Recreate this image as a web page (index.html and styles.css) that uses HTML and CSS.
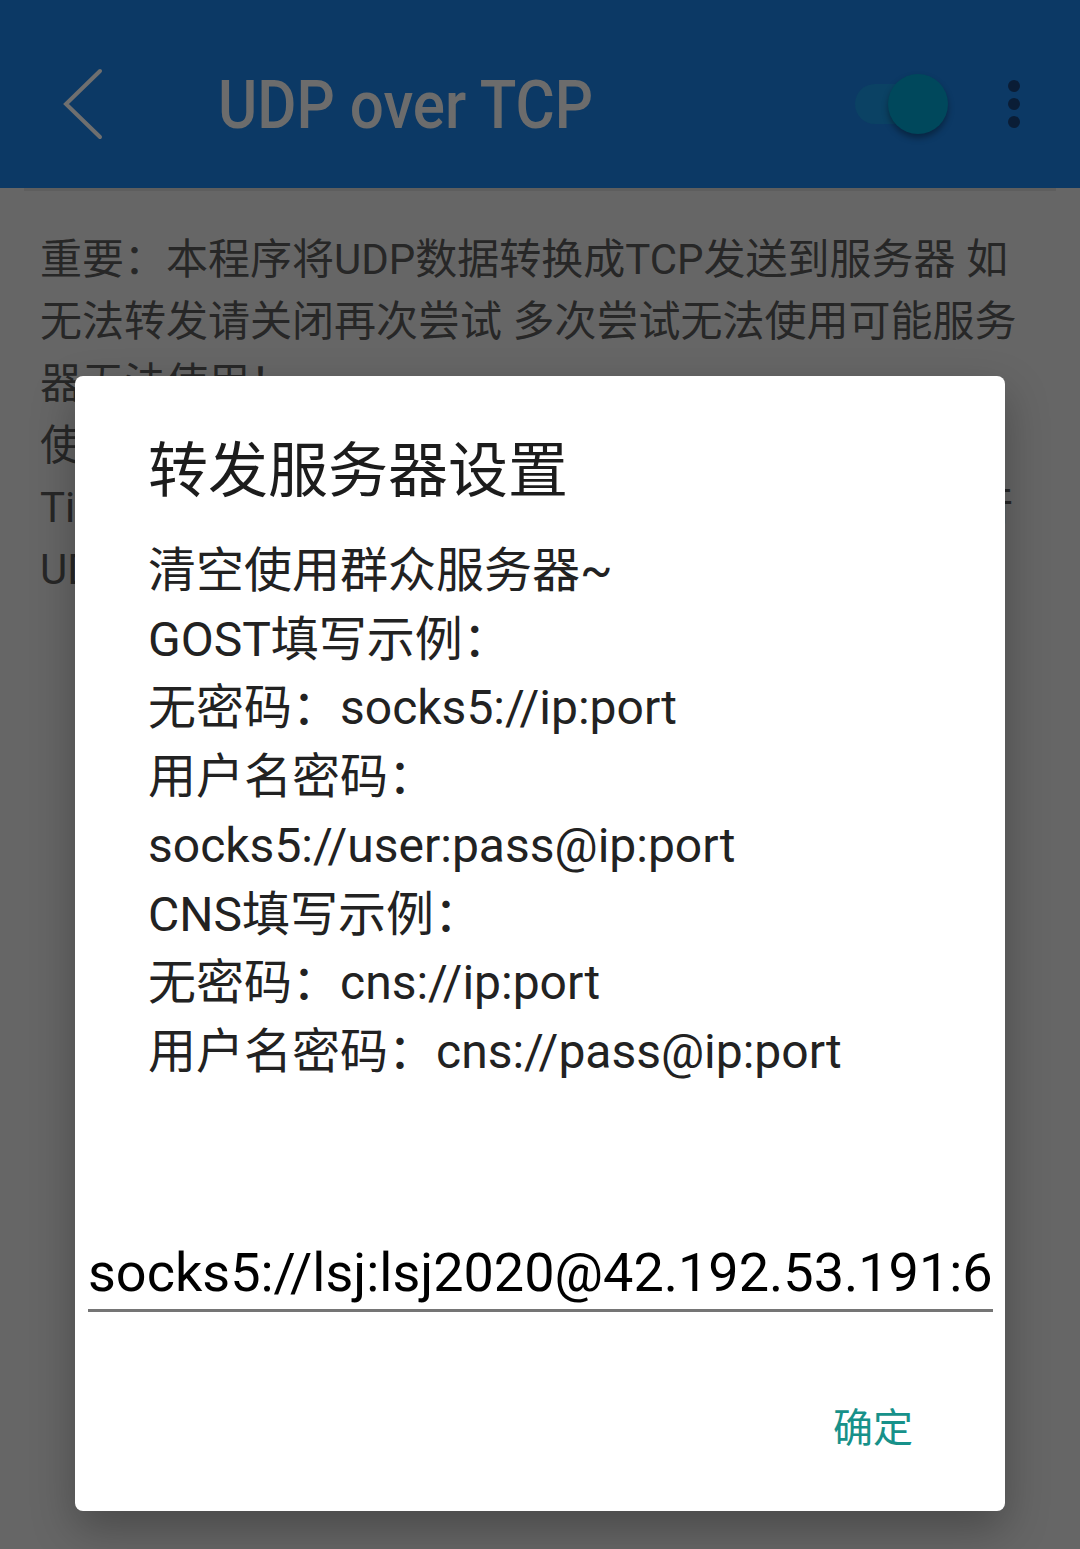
FILE: index.html
```html
<!DOCTYPE html>
<html lang="zh-CN">
<head>
<meta charset="utf-8">
<title>UDP over TCP</title>
<link rel="stylesheet" href="styles.css">
</head>
<body>
<div class="screen">
  <header class="appbar">
    <svg class="back" width="44" height="72" viewBox="0 0 44 72" aria-hidden="true">
      <polyline points="40,3 6,36 40,69" fill="none" stroke="#6f6f6f" stroke-width="4" stroke-linecap="round" stroke-linejoin="miter"/>
    </svg>
    <h1 class="title">UDP over TCP</h1>
    <div class="switch">
      <span class="track"></span>
      <span class="thumb"></span>
    </div>
    <div class="more"><i></i><i></i><i></i></div>
  </header>
  <div class="divider"></div>
  <main class="content">
    <p class="line">重要：本程序将UDP数据转换成TCP发送到服务器 如</p>
    <p class="line">无法转发请关闭再次尝试 多次尝试无法使用可能服务</p>
    <p class="line">器无法使用！</p>
    <p class="line">使用说明：填写服务器后打开开关</p>
    <p class="line full">Tips：如需转发游戏语音请先开启本软件再运行</p>
    <p class="line">UDP转发默认使用群众服务器</p>
  </main>
</div>

<div class="dialog" role="dialog">
  <h2 class="dialog-title">转发服务器设置</h2>
  <div class="dialog-body">
    <p>清空使用群众服务器~</p>
    <p>GOST填写示例：</p>
    <p>无密码：socks5://ip:port</p>
    <p>用户名密码：socks5://user:pass@ip:port</p>
    <p>CNS填写示例：</p>
    <p>无密码：cns://ip:port</p>
    <p>用户名密码：cns://pass@ip:port</p>
  </div>
  <input class="server-input" type="text" value="socks5://lsj:lsj2020@42.192.53.191:6666">
  <div class="actions">
    <button class="ok" type="button">确定</button>
  </div>
</div>
</body>
</html>
```

FILE: styles.css
```css
html, body {
  margin: 0;
  padding: 0;
}

body {
  width: 1080px;
  height: 1549px;
  overflow: hidden;
  background: #666666;
  font-family: Roboto, "Noto Sans CJK SC", sans-serif;
  position: relative;
}

.screen {
  width: 1080px;
}

.appbar {
  height: 168px;
  padding: 20px 0 0 60px;
  background: #0c3965;
  display: flex;
  align-items: center;
}

.back {
  display: block;
  flex: none;
}

.title {
  margin: 4px 0 0 114px;
  font-size: 66px;
  font-weight: 500;
  line-height: 80px;
  color: #6c6c6c;
  transform: scaleX(0.91);
  transform-origin: left center;
  white-space: nowrap;
  flex: none;
}

.switch {
  margin-left: auto;
  width: 93px;
  height: 60px;
  position: relative;
  flex: none;
}

.track {
  position: absolute;
  left: 0;
  top: 10px;
  width: 76px;
  height: 40px;
  border-radius: 20px;
  background: #0b4264;
}

.thumb {
  position: absolute;
  left: 33px;
  top: 0;
  width: 60px;
  height: 60px;
  border-radius: 50%;
  background: #00485c;
  box-shadow: 0 4px 6px rgba(0, 0, 0, 0.35);
}

.more {
  margin: 0 60px 0 60px;
  display: flex;
  flex-direction: column;
  gap: 6px;
  flex: none;
}

.more i {
  display: block;
  width: 12px;
  height: 12px;
  border-radius: 50%;
  background: #0a1d36;
}

.divider {
  margin: 0 24px;
  height: 3px;
  background: #5e5e5e;
}

.content {
  padding: 38px 40px 0;
  font-size: 42px;
  line-height: 62px;
  color: #272727;
}

.line {
  margin: 0;
  white-space: nowrap;
}

.line.full {
  width: 973px;
  text-align: justify;
  text-align-last: justify;
}

.dialog {
  position: absolute;
  left: 75px;
  top: 376px;
  width: 930px;
  height: 1135px;
  box-sizing: border-box;
  padding-top: 56px;
  background: #ffffff;
  border-radius: 8px;
  box-shadow: 0 18px 44px rgba(0, 0, 0, 0.28);
  display: flex;
  flex-direction: column;
}

.dialog-title {
  margin: 0;
  padding: 0 73px;
  font-size: 60px;
  font-weight: 400;
  line-height: 80px;
  color: #1c1c1c;
}

.dialog-body {
  margin-top: 25px;
  padding: 0 73px;
  font-size: 48px;
  line-height: 68.7px;
  color: #222222;
}

.dialog-body p {
  margin: 0;
}

.server-input {
  margin: 150px 12px 0 13px;
  height: 75px;
  box-sizing: border-box;
  padding: 0;
  border: none;
  border-bottom: 3px solid #757575;
  outline: none;
  background: transparent;
  font-family: Roboto, "Noto Sans CJK SC", sans-serif;
  font-size: 54px;
  line-height: 70px;
  color: #000000;
}

.actions {
  margin-top: 89px;
  display: flex;
  justify-content: flex-end;
  padding-right: 92px;
}

.ok {
  border: none;
  background: transparent;
  padding: 0;
  font-family: Roboto, "Noto Sans CJK SC", sans-serif;
  font-size: 40px;
  line-height: 56px;
  color: #17918a;
}
```
